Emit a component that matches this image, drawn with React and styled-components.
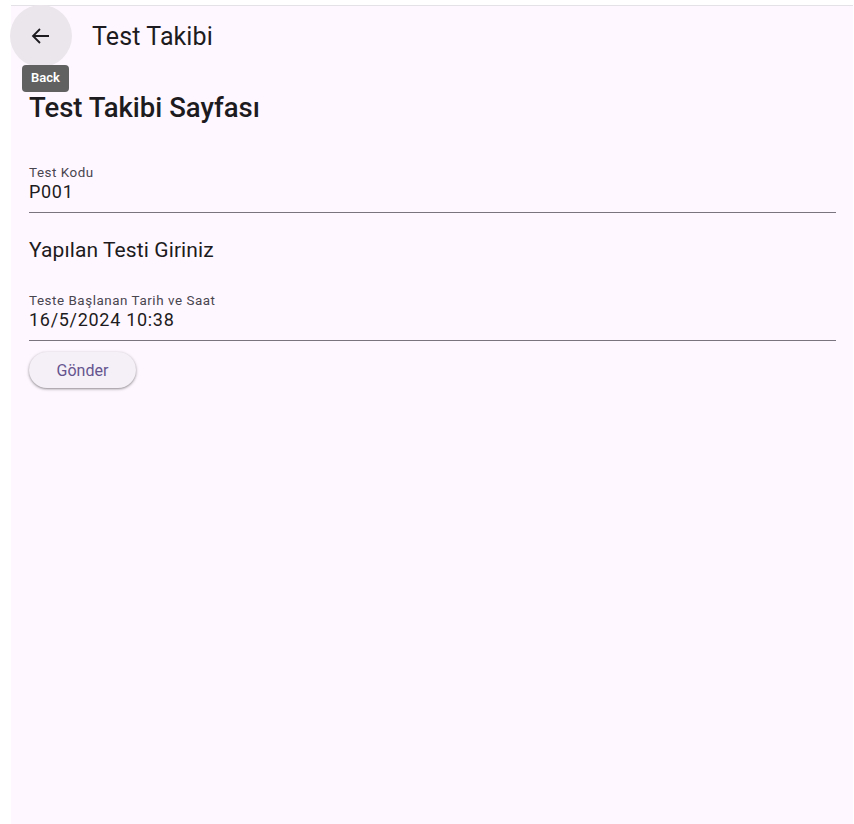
import styled, { createGlobalStyle } from "styled-components";

const GlobalStyle = createGlobalStyle`
* { box-sizing: border-box; }
html, body { margin: 0; padding: 0; background: #fff; }
body { font-family: Roboto, "Noto Sans", sans-serif; }
`

const Frame = styled.div`
padding: 5px 1px 0 11px;
height: 824px;
`
const Screen = styled.div`
height: 100%;
background: #fef7ff;
border-top: 1px solid #e4e2e6;
display: flex;
flex-direction: column;
`
const AppBar = styled.header`
position: relative;
height: 56px;
display: flex;
align-items: center;
`
const BackBtn = styled.button`
width: 62px;
height: 62px;
margin: 4px 0 0 -1px;
border: none;
border-radius: 50%;
background: #ebe6ec;
display: flex;
align-items: center;
justify-content: center;
color: #1d1b20;
padding: 0;
`
const AppTitle = styled.h1`
margin: 4px 0 0 20px;
font-size: 25px;
font-weight: 400;
letter-spacing: 0.1px;
color: #1d1b20;
`
const Tooltip = styled.span`
position: absolute;
left: 11px;
top: 59px;
background: #616161;
color: #fff;
font-size: 13px;
font-weight: 600;
padding: 5px 9px 6px;
border-radius: 4px;
line-height: 16px;
`
const Body = styled.main`
padding: 31px 17px 0 18px;
`
const PageTitle = styled.h2`
margin: 0 0 42px;
font-size: 27.5px;
font-weight: 500;
color: #1d1b20;
line-height: 30px;
`
const Field = styled.div`
border-bottom: 1px solid #79747e;
padding-bottom: 9px;
`
const Label = styled.div`
font-size: 13.4px;
color: #49454f;
line-height: 16px;
letter-spacing: 0.55px;
`
const Value = styled.div`
font-size: 18px;
color: #1d1b20;
line-height: 22px;
letter-spacing: 0.7px;
`
const Section = styled.h3`
margin: 25px 0 31px;
font-size: 21px;
font-weight: 400;
color: #1d1b20;
line-height: 24px;
letter-spacing: 0.1px;
`
const SendBtn = styled.button`
margin-top: 11px;
height: 36px;
width: 107px;
border: none;
border-radius: 18px;
background: #f5eff7;
color: #65558f;
font-family: Roboto, sans-serif;
font-size: 16px;
box-shadow: 0 1px 2px rgba(0, 0, 0, 0.3), 0 1px 3px 1px rgba(0, 0, 0, 0.12);
`

const App = () => {
    return (
        <Frame>
            <GlobalStyle />
            <Screen>
                <AppBar>
                    <BackBtn aria-label="Back">
                        <svg width="24" height="24" viewBox="0 0 24 24" fill="none" stroke="currentColor" strokeWidth="1.8">
                            <path d="M20 12H4M11 5l-7 7 7 7" />
                        </svg>
                    </BackBtn>
                    <AppTitle>Test Takibi</AppTitle>
                    <Tooltip>Back</Tooltip>
                </AppBar>
                <Body>
                    <PageTitle>Test Takibi Sayfası</PageTitle>
                    <Field>
                        <Label>Test Kodu</Label>
                        <Value>P001</Value>
                    </Field>
                    <Section>Yapılan Testi Giriniz</Section>
                    <Field>
                        <Label>Teste Başlanan Tarih ve Saat</Label>
                        <Value>16/5/2024 10:38</Value>
                    </Field>
                    <SendBtn>Gönder</SendBtn>
                </Body>
            </Screen>
        </Frame>
    )
}

export default App;
